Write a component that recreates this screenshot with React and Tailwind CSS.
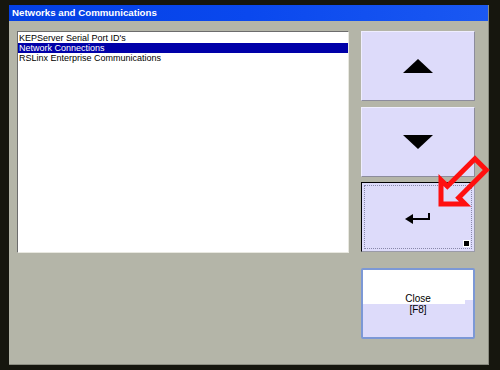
import React from "react";

const items = [
  "KEPServer Serial Port ID's",
  "Network Connections",
  "RSLinx Enterprise Communications",
];

const Triangle = ({ down }) => (
  <svg width="30" height="16" viewBox="0 0 30 16">
    <polygon points={down ? "0,1 30,1 15,15" : "15,1 30,15 0,15"} fill="#000" />
  </svg>
);

const PanelButton = ({ children, focused }) => (
  <div
    className={`relative h-[70px] w-[114px] bg-[#dddbfa] flex items-center justify-center border ${
      focused
        ? "border-l-black border-t-black border-r-[#9a9aa8] border-b-[#9a9aa8]"
        : "border-l-[#efeeff] border-t-[#efeeff] border-r-[#8c8c9c] border-b-[#8c8c9c]"
    }`}
  >
    {focused && (
      <div className="absolute inset-[2px] border border-dotted border-[#8888aa]" />
    )}
    {children}
  </div>
);

const App = () => {
  return (
    <div className="relative w-[500px] h-[370px] bg-[#16160e] overflow-hidden font-['Liberation_Sans',Arial,sans-serif]">
      <div className="absolute left-[9px] top-[5px] w-[480px] h-[360px] bg-[#b4b5a8] flex flex-col border-r border-b border-[#8a8b80]">
        <div className="h-[16px] flex items-center pl-[3px] bg-gradient-to-r from-[#0440e4] via-[#0a48ee] to-[#1a58f2] text-white text-[9.7px] font-bold leading-none">
          Networks and Communications
        </div>
        <div className="flex pl-[8px] pt-[10px] gap-[12px]">
          <div className="w-[332px] h-[222px] bg-white border border-l-[#6c6c6c] border-t-[#6c6c6c] border-r-[#e8e8e0] border-b-[#e8e8e0] pt-[1px] text-[9px] leading-[10px]">
            {items.map((item, i) => (
              <div
                key={item}
                className={`h-[10px] pl-[1px] whitespace-nowrap ${
                  i === 1 ? "bg-[#0000a8] text-white" : "text-black"
                }`}
              >
                {item}
              </div>
            ))}
          </div>
          <div className="flex flex-col">
            <PanelButton>
              <Triangle />
            </PanelButton>
            <div className="h-[6px]" />
            <PanelButton>
              <Triangle down />
            </PanelButton>
            <div className="h-[5px]" />
            <PanelButton focused>
              <svg width="26" height="12" viewBox="0 0 26 12" className="mt-[2px]">
                <polygon points="0,7 8,2 8,12" fill="#000" />
                <rect x="6" y="6" width="19" height="2" fill="#000" />
                <rect x="23" y="1" width="2" height="7" fill="#000" />
              </svg>
              <div className="absolute right-[4px] bottom-[4px] w-[7px] h-[7px] bg-white flex items-center justify-center">
                <div className="w-[5px] h-[5px] bg-black" />
              </div>
            </PanelButton>
            <div className="h-[16px]" />
            <div className="relative h-[71px] w-[114px] rounded-[2px] border-2 border-[#7c98d6] bg-[#dddbfa] overflow-hidden">
              <div className="absolute left-0 top-0 w-full h-[30px] bg-white" />
              <div className="absolute left-0 top-[30px] w-[102px] h-[4px] bg-white" />
              <div className="relative h-full flex flex-col items-center justify-center pt-[1px] text-[10px] leading-[11px] text-black">
                <span>Close</span>
                <span>[F8]</span>
              </div>
            </div>
          </div>
        </div>
      </div>
      <svg className="absolute left-0 top-0" width="500" height="370">
        <polygon
          points="0,0 17,-17 17,-8 56,-8 56,8 17,8 17,17"
          transform="translate(441 204) rotate(-45)"
          fill="none"
          stroke="#ff1010"
          strokeWidth="5"
          strokeLinejoin="miter"
        />
      </svg>
    </div>
  );
};

export default App;
